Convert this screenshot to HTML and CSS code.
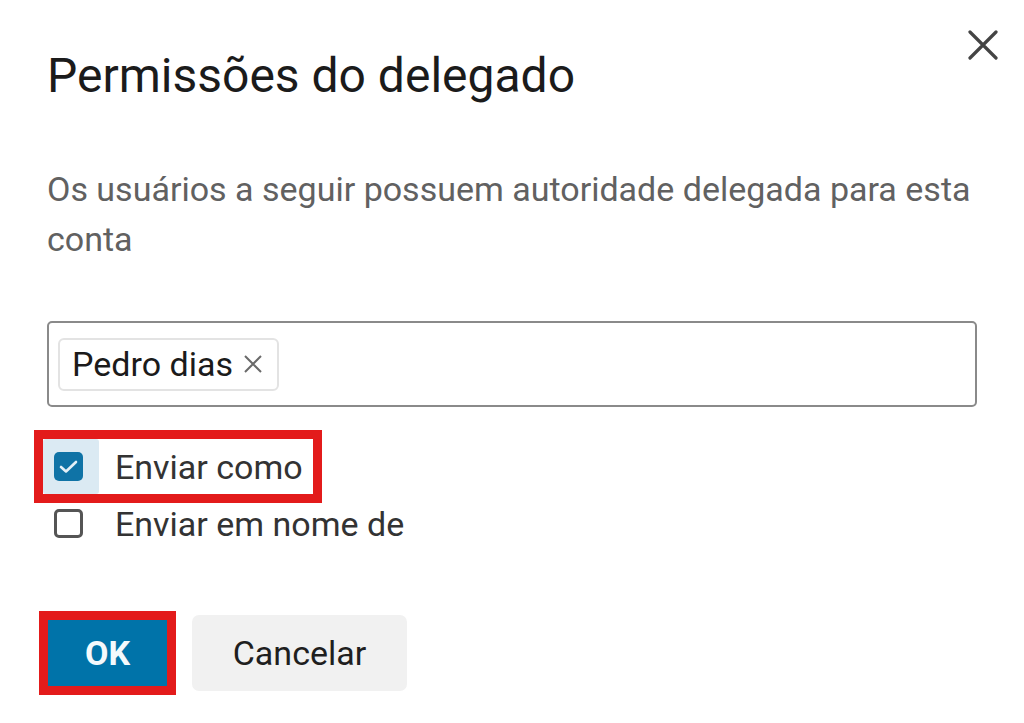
FILE: index.html
```html
<!DOCTYPE html>
<html lang="pt">
<head>
<meta charset="utf-8">
<link rel="stylesheet" href="styles.css">
</head>
<body>
<div class="dialog">
  <button class="close" aria-label="Fechar">
    <svg width="30" height="30" viewBox="0 0 30 30"><path d="M2 2 L28 28 M28 2 L2 28" stroke="#444" stroke-width="3.2" stroke-linecap="round"/></svg>
  </button>
  <h1 class="title">Permissões do delegado</h1>
  <p class="desc">Os usuários a seguir possuem autoridade delegada para esta conta</p>
  <div class="picker">
    <span class="chip">Pedro dias
      <svg class="chip-x" width="22" height="22" viewBox="0 0 22 22"><path d="M3 3 L19 19 M19 3 L3 19" stroke="#6a6a6a" stroke-width="2"/></svg>
    </span>
  </div>
  <div class="options">
    <label class="opt opt-marked">
      <span class="cb-wrap cb-wrap-active"><span class="cb cb-checked">
        <svg width="29" height="29" viewBox="0 0 29 29"><path d="M7 15 L12 19.5 L22 10" fill="none" stroke="#e4f0f7" stroke-width="2.6" stroke-linecap="round" stroke-linejoin="round"/></svg>
      </span></span>
      <span class="opt-label">Enviar como</span>
    </label>
    <label class="opt">
      <span class="cb-wrap"><span class="cb"></span></span>
      <span class="opt-label">Enviar em nome de</span>
    </label>
  </div>
  <div class="actions">
    <button class="btn btn-primary">OK</button>
    <button class="btn btn-secondary">Cancelar</button>
  </div>
</div>
</body>
</html>
```
FILE: styles.css
```css
html, body {
  margin: 0;
  padding: 0;
  background: #fff;
}
body {
  font-family: Roboto, "Liberation Sans", Arial, sans-serif;
  width: 1024px;
  height: 723px;
  overflow: hidden;
}
.dialog {
  position: relative;
  padding: 40px 47px 0 47px;
}
.close {
  position: absolute;
  top: 29px;
  right: 25px;
  border: 0;
  background: transparent;
  padding: 0;
  width: 32px;
  height: 32px;
  display: flex;
  align-items: center;
  justify-content: center;
}
.title {
  margin: 0;
  font-size: 48px;
  font-weight: 400;
  line-height: 72px;
  color: #1b1b1b;
}
.desc {
  margin: 52px 0 0;
  font-size: 34px;
  line-height: 50px;
  color: #616161;
  max-width: 930px;
}
.picker {
  margin-top: 57px;
  width: 930px;
  height: 86px;
  box-sizing: border-box;
  border: 2px solid #8a8a8a;
  border-radius: 5px;
  padding: 0 9px;
  display: flex;
  align-items: center;
}
.chip {
  display: inline-flex;
  align-items: center;
  height: 53px;
  box-sizing: border-box;
  padding: 0 13px 0 12px;
  border: 2px solid #e3e3e3;
  border-radius: 6px;
  font-size: 34px;
  color: #1b1b1b;
  gap: 9px;
}
.chip-x {
  display: block;
}
.options {
  margin-top: 32px;
  margin-left: -4px;
  display: flex;
  flex-direction: column;
  gap: 2px;
}
.opt {
  display: flex;
  align-items: center;
  height: 55px;
  font-size: 34px;
  color: #333;
}
.opt-marked {
  width: 270px;
  outline: 9px solid #e31b1b;
}
.cb-wrap {
  width: 56px;
  height: 55px;
  box-sizing: border-box;
  padding-left: 11px;
  display: flex;
  align-items: center;
  border-radius: 3px;
}
.cb-wrap-active {
  background: #dbeaf3;
}
.cb {
  width: 29px;
  height: 29px;
  box-sizing: border-box;
  border: 3px solid #555;
  border-radius: 5px;
  display: flex;
  align-items: center;
  justify-content: center;
  background: #fff;
}
.cb-checked {
  border: 0;
  background: #0f73a6;
}
.opt-label {
  margin-left: 16px;
}
.actions {
  margin-top: 64px;
  display: flex;
  align-items: center;
  gap: 25px;
}
.btn {
  font-family: Roboto, "Liberation Sans", Arial, sans-serif;
  font-size: 34px;
  border: 0;
  cursor: pointer;
}
.btn-primary {
  margin-left: 1px;
  width: 119px;
  height: 66px;
  background: #0073a9;
  color: #f4f9fc;
  font-weight: 700;
  outline: 9px solid #e31b1b;
}
.btn-secondary {
  width: 215px;
  height: 76px;
  background: #f1f1f1;
  color: #1f1f1f;
  border-radius: 7px;
}
```
